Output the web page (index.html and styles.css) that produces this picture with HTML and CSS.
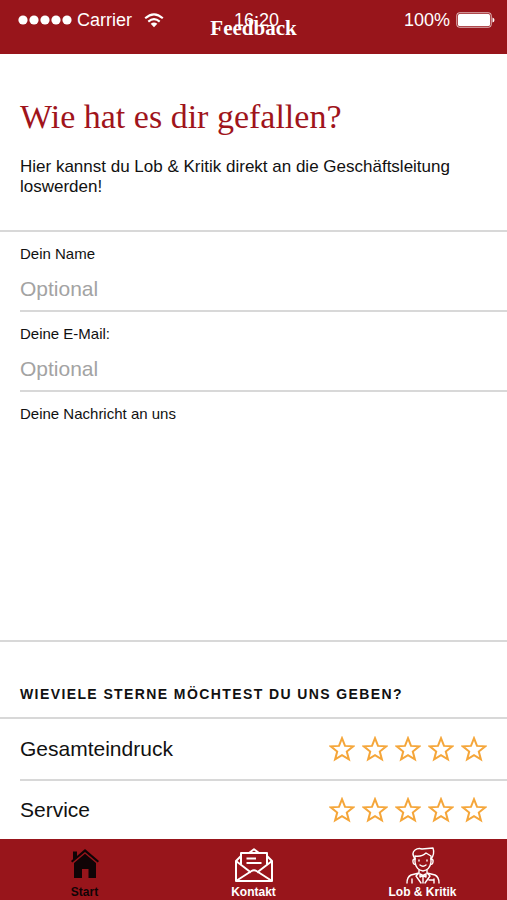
FILE: index.html
```html
<!DOCTYPE html>
<html lang="de">
<head>
<meta charset="utf-8">
<meta name="viewport" content="width=device-width, initial-scale=1">
<title>Feedback</title>
<link rel="stylesheet" href="styles.css">
</head>
<body>
<svg class="sprite" aria-hidden="true">
  <symbol id="star" viewBox="0 0 26 26"><path d="M13 2.2 16 9.9 24.2 10.3 17.8 15.5 19.9 23.4 13 19.1 6.1 23.4 8.2 15.5 1.8 10.3 10 9.9Z" fill="none" stroke="currentColor" stroke-width="2"/></symbol>
</svg>
<header class="top">
  <div class="status">
    <div class="carrier">
      <svg class="signal" viewBox="0 0 54 10" aria-hidden="true"><g fill="currentColor"><circle cx="5" cy="5" r="4.6"/><circle cx="16" cy="5" r="4.6"/><circle cx="27" cy="5" r="4.6"/><circle cx="38" cy="5" r="4.6"/><circle cx="49" cy="5" r="4.6"/></g></svg>
      <span>Carrier</span>
      <svg class="wifi" viewBox="0 0 20 15" aria-hidden="true"><g fill="none" stroke="currentColor" stroke-width="2.1"><path d="M1.2 5.3Q10-2.6 18.8 5.3"/><path d="M4.3 8.6Q10 3.6 15.7 8.6"/></g><path d="M6.7 10.8Q10 8.2 13.3 10.8L10 14.2Z" fill="currentColor"/></svg>
    </div>
    <time>16:20</time>
    <div class="power">
      <span>100%</span>
      <svg class="battery" viewBox="0 0 39 16" aria-hidden="true"><rect x=".8" y=".8" width="34.4" height="14.4" rx="2.5" fill="none" stroke="currentColor" stroke-opacity=".75"/><rect x="2" y="2" width="32" height="12" rx="1.5" fill="currentColor"/><path d="M36.5 5.5Q38.5 6 38.5 8T36.5 10.5Z" fill="currentColor"/></svg>
    </div>
  </div>
  <div class="title">Feedback</div>
</header>
<form class="content">
  <section class="intro">
    <h1>Wie hat es dir gefallen?</h1>
    <p>Hier kannst du Lob &amp; Kritik direkt an die Geschäftsleitung loswerden!</p>
  </section>
  <div class="fields">
    <div class="field"><label for="name">Dein Name</label><input id="name" type="text" placeholder="Optional"></div>
    <div class="field"><label for="mail">Deine E-Mail:</label><input id="mail" type="email" placeholder="Optional"></div>
    <div class="field message"><label for="message">Deine Nachricht an uns</label><textarea id="message"></textarea></div>
  </div>
  <h2>Wieviele Sterne möchtest du uns geben?</h2>
  <div class="ratings">
    <div class="rating" role="radiogroup" aria-labelledby="overall">
      <span id="overall">Gesamteindruck</span>
      <div class="stars">
        <label><input type="radio" name="overall" value="1" aria-label="1 Stern"><svg><use href="#star"/></svg></label>
        <label><input type="radio" name="overall" value="2" aria-label="2 Sterne"><svg><use href="#star"/></svg></label>
        <label><input type="radio" name="overall" value="3" aria-label="3 Sterne"><svg><use href="#star"/></svg></label>
        <label><input type="radio" name="overall" value="4" aria-label="4 Sterne"><svg><use href="#star"/></svg></label>
        <label><input type="radio" name="overall" value="5" aria-label="5 Sterne"><svg><use href="#star"/></svg></label>
      </div>
    </div>
    <div class="rating" role="radiogroup" aria-labelledby="service">
      <span id="service">Service</span>
      <div class="stars">
        <label><input type="radio" name="service" value="1" aria-label="1 Stern"><svg><use href="#star"/></svg></label>
        <label><input type="radio" name="service" value="2" aria-label="2 Sterne"><svg><use href="#star"/></svg></label>
        <label><input type="radio" name="service" value="3" aria-label="3 Sterne"><svg><use href="#star"/></svg></label>
        <label><input type="radio" name="service" value="4" aria-label="4 Sterne"><svg><use href="#star"/></svg></label>
        <label><input type="radio" name="service" value="5" aria-label="5 Sterne"><svg><use href="#star"/></svg></label>
      </div>
    </div>
  </div>
</form>
<nav class="tabs">
  <a class="tab current" href="#start">
    <svg viewBox="0 0 40 38" aria-hidden="true"><path d="M8 4.5H12V9L20 2 34 14 32.7 15.6 20 4.9 7.3 15.6 6 14 8 12.2Z" fill="currentColor"/><path d="M9 16 20 6.8 31 16V31H23.5V22H17V31H9Z" fill="currentColor"/></svg>
    <span>Start</span>
  </a>
  <a class="tab" href="#kontakt">
    <svg viewBox="0 0 40 38" aria-hidden="true"><g fill="none" stroke="currentColor" stroke-width="2" stroke-linejoin="round"><path d="M7 9 2 14V34H38V14L33 9"/><path d="M2 14 17 25.5M38 14 23 25.5M2 34 17.5 24Q20 22.3 22.5 24L38 34"/><path d="M7 17.5V6H33V17.5M15 6 20 2.2 25 6M12.5 11.5H22M12.5 16H27.5"/></g></svg>
    <span>Kontakt</span>
  </a>
  <a class="tab" href="#lob">
    <svg viewBox="0 0 40 38" aria-hidden="true"><g fill="none" stroke="currentColor" stroke-width="1.4" stroke-linecap="round" stroke-linejoin="round"><path d="M12 12Q8 6 12 3Q15 .8 19 2L30 1Q32 7 28 12"/><path d="M12 9Q19 10 23 6L28 9V15Q27 23 20 24Q13 23 12 15Z"/><path d="M12 12Q9.5 12 10 15T12.5 17M28 12Q30.5 12 30 15T27.5 17M16 13V14M24 13V14M17 18Q20 20.5 23 18"/><path d="M16 23V26L8 28Q4 30 4 36M24 23V26L32 28Q36 30 36 36M16 26 13 29 18 36M24 26 27 29 22 36M17 27 23 30V27L17 30ZM20 30V36M9 32V36M31 32V36M26 33H30"/></g></svg>
    <span>Lob &amp; Kritik</span>
  </a>
</nav>
</body>
</html>
```
FILE: styles.css
```css
:root {
  --red: #98151b;
  --line: #d8d8d8;
  --gutter: 20px;
}

* { box-sizing: border-box; }

body {
  margin: 0;
  min-height: 100vh;
  display: flex;
  flex-direction: column;
  background: #fff;
  color: #111;
  font-family: "Liberation Sans", Arial, sans-serif;
}

.sprite { position: absolute; width: 0; height: 0; }

.top {
  position: relative;
  height: 54px;
  background: var(--red);
  color: #fff;
}

.status {
  display: grid;
  grid-template-columns: 1fr auto 1fr;
  align-items: center;
  padding: 8px 12px 0 18px;
  font-size: 18px;
  line-height: 24px;
}

.carrier, .power { display: flex; align-items: center; }
.power { justify-content: flex-end; gap: 6px; }
.signal { width: 54px; height: 10px; margin-right: 5px; }
.wifi { width: 20px; height: 15px; margin-left: 12px; }
.battery { width: 39px; height: 16px; }

.title {
  position: absolute;
  inset: 16px 0 auto;
  text-align: center;
  font: bold 21px/24px "Liberation Serif", serif;
}

.content { flex: 1; display: flex; flex-direction: column; }

.intro { padding: 42px var(--gutter) 33px; }

h1 {
  margin: 0 0 19px;
  color: #a0141b;
  font: 34px/42px "Liberation Serif", serif;
}

.intro p { margin: 0; font-size: 17px; line-height: 20px; }

.fields {
  flex: 1;
  display: flex;
  flex-direction: column;
  padding-left: var(--gutter);
  border-top: 2px solid var(--line);
  border-bottom: 2px solid var(--line);
}

.field {
  display: flex;
  flex-direction: column;
  padding: 12px 0 5px;
  border-bottom: 2px solid var(--line);
}

.field label { font-size: 15px; line-height: 20px; }

.field input, .field textarea {
  width: 100%;
  margin: 9px 0 0;
  padding: 0;
  border: 0;
  outline: 0;
  background: none;
  color: inherit;
  font: 21px/32px "Liberation Sans", Arial, sans-serif;
}

.field input { height: 32px; }
.field input::placeholder { color: #a3a3a3; }
.message { flex: 1; border-bottom: 0; }
.message textarea { flex: 1; resize: none; }

h2 {
  margin: 0;
  padding: 42px var(--gutter) 13px;
  border-bottom: 2px solid var(--line);
  font-size: 14px;
  line-height: 20px;
  letter-spacing: 0.1em;
  text-transform: uppercase;
}

.ratings { padding-left: var(--gutter); }

.rating {
  display: flex;
  align-items: center;
  justify-content: space-between;
  height: 60px;
  padding-right: var(--gutter);
  font-size: 21px;
}

.rating + .rating { border-top: 2px solid var(--line); }

.stars { display: flex; gap: 7px; color: #f5a63a; }
.stars label { display: flex; }
.stars input { appearance: none; width: 0; height: 0; margin: 0; }
.stars svg { width: 26px; height: 26px; }
.stars label:has(~ label input:checked) svg,
.stars input:checked + svg { fill: currentColor; }

.tabs {
  position: sticky;
  bottom: 0;
  display: grid;
  grid-template-columns: repeat(3, 1fr);
  height: 61px;
  background: var(--red);
}

.tab {
  display: flex;
  flex-direction: column;
  align-items: center;
  padding-top: 8px;
  color: #fff;
  text-decoration: none;
  font-size: 12px;
  font-weight: bold;
  line-height: 14px;
}

.tab svg { width: 40px; height: 38px; }
.current { color: #100406; }
```
